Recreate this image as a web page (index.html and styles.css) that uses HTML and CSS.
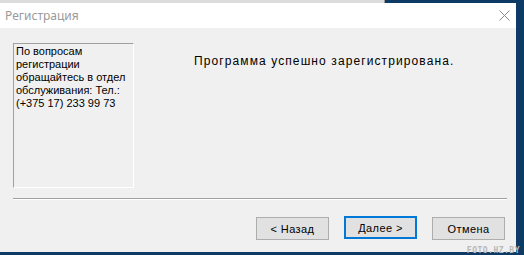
FILE: index.html
```html
<!DOCTYPE html>
<html lang="ru">
<head>
  <meta charset="UTF-8" />
  <title>Регистрация</title>
  <link rel="stylesheet" href="styles.css">
</head>
<body>
  <div class="backdrop">
    <div class="behind"></div>
  </div>
  <div class="window">
    <div class="titlebar">
      <span class="title">Регистрация</span>
      <svg class="close" width="11" height="11" viewBox="0 0 11 11">
        <path d="M0.5 0.5L10.5 10.5M10.5 0.5L0.5 10.5" stroke="#8a8a8a" stroke-width="1" fill="none"/>
      </svg>
    </div>
    <div class="content">
      <div class="top">
        <div class="info">По вопросам регистрации обращайтесь в отдел обслуживания: Тел.: (+375 17) 233 99 73</div>
        <div class="message">Программа успешно зарегистрирована.</div>
      </div>
      <div class="separator"></div>
      <div class="buttons">
        <button class="btn">&lt; Назад</button>
        <button class="btn btn-default">Далее &gt;</button>
        <button class="btn btn-cancel">Отмена</button>
      </div>
    </div>
  </div>
  <div class="watermark">FOTO.HZ.BY</div>
</body>
</html>
```

FILE: styles.css
```css
body {
  margin: 0;
  width: 524px;
  height: 255px;
  background: #0e3a66;
  position: relative;
  overflow: hidden;
  font-family: "Liberation Sans", Arial, sans-serif;
}

.backdrop {
  height: 3px;
  display: flex;
}

.behind {
  width: 384px;
  background: #dcdcdc;
  border-right: 1px solid #9a9a9a;
}

.window {
  width: 516px;
  height: 249px;
  background: #f0f0f0;
  display: flex;
  flex-direction: column;
}

.titlebar {
  height: 25px;
  background: #fff;
  display: flex;
  align-items: center;
  justify-content: space-between;
  padding: 0 6px 0 5px;
}

.title {
  font-family: "Noto Sans", "Open Sans", sans-serif;
  font-size: 12px;
  color: #9a9a9a;
}

.close {
  margin-right: 0;
}

.content {
  flex: 1;
  padding: 15px 9px 0 13px;
}

.top {
  display: flex;
  height: 145px;
}

.info {
  width: 116px;
  height: 141px;
  padding: 1px 1px 1px 2px;
  border-top: 1px solid #a0a0a0;
  border-left: 1px solid #a0a0a0;
  border-right: 1px solid #fff;
  border-bottom: 1px solid #fff;
  font-size: 11px;
  line-height: 13px;
  color: #000;
}

.message {
  margin: 11px 0 0 60px;
  font-size: 12px;
  letter-spacing: 1.1px;
  color: #000;
}

.separator {
  margin-top: 10px;
  height: 1px;
  background: #a0a0a0;
  border-bottom: 1px solid #fff;
}

.buttons {
  display: flex;
  justify-content: flex-end;
  gap: 15px;
  margin-top: 17px;
  padding-right: 2px;
}

.btn {
  width: 73px;
  height: 23px;
  background: #e1e1e1;
  border: 1px solid #adadad;
  font-family: "Liberation Sans", Arial, sans-serif;
  font-size: 11px;
  letter-spacing: 0.4px;
  color: #000;
  padding: 0;
}

.btn-default {
  border: 2px solid #0078d7;
  margin-top: -1px;
}

.watermark {
  position: absolute;
  right: 4px;
  bottom: 0;
  font-family: "DejaVu Sans Mono", monospace;
  font-size: 8px;
  font-weight: bold;
  color: #b8b8b8;
  letter-spacing: 0.5px;
}
```
